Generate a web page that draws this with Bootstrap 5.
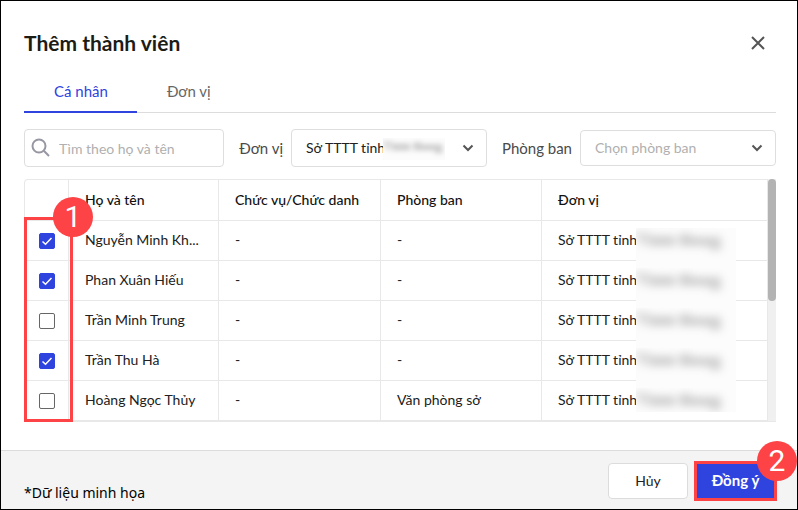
<!DOCTYPE html>
<html lang="vi">
<head>
<meta charset="utf-8">
<meta name="viewport" content="width=device-width, initial-scale=1">
<title>Thêm thành viên</title>
<link href="https://cdn.jsdelivr.net/npm/bootstrap@5.3.0/dist/css/bootstrap.min.css" rel="stylesheet">
<style>
:root{--brand:#2f43df;--mark:#fd4345;--line:#e8e8e8}
body{font-family:Lato,Roboto,"Liberation Sans",sans-serif;font-size:15px;line-height:20px;color:#212121}
.dialog-shell{border:1px solid #000;overflow:hidden}
.dialog-head{padding:27px 21px 0 23px}
.dialog-title{font-size:21px;line-height:30px;font-weight:700;color:#1c1c14}
.close-btn{width:36px;height:30px}
.member-tabs{margin:14px 21px 0 23px;height:41px;border-bottom:1px solid #dcdcdc}
.member-tabs .nav-link{height:41px;padding:9px 29px 10px 30px;color:#666;line-height:20px}
.member-tabs .nav-link.active{color:var(--brand);border-bottom:2px solid var(--brand)}
.filters{display:grid;grid-template-columns:200fr 67px 196fr 93px 196fr;align-items:center;padding:16px 21px 12px 23px}
.filters label{color:#4a4a4a;text-align:right;padding-right:8px;white-space:nowrap}
.field{height:38px;border:1px solid #dedede;border-radius:4px;font-size:14px;color:#212121;padding:0 14px;background:#fff;appearance:none}
.search-field{padding-left:34px}
.field::placeholder,.field.unset{color:#b0b0b0;opacity:1}
.short-field{height:36px}
.search-icon{left:7px;top:9px}
.chevron{right:12px;top:50%;margin-top:-6px;pointer-events:none}
.table-area{margin:0 21px 28px 23px}
.member-table{table-layout:fixed;border-collapse:separate;border-spacing:0;border:1px solid var(--line);border-bottom-width:2px;border-radius:4px 0 0 0;font-size:14px}
.member-table th,.member-table td{height:40px;padding:0 16px 2px;border-right:1px solid var(--line);border-top:1px solid var(--line);vertical-align:middle;white-space:nowrap}
.member-table thead th{font-weight:500;border-top:0;color:#111;padding-bottom:0}
.member-table tr>:last-child{border-right:0}
.member-table tr>:first-child{padding:0}
.col-check{width:44px}.col-name{width:150px}.col-title{width:162px}.col-dept{width:161px}
.member-table .form-check-input{display:block;float:none;width:16px;height:16px;margin:0 auto;border:1px solid #666;border-radius:2px;box-shadow:none}
.member-table .form-check-input:checked{background-color:var(--brand);border-color:var(--brand);background-size:14px 14px;background-position:center;background-image:url("data:image/svg+xml,%3csvg xmlns='http://www.w3.org/2000/svg' viewBox='0 0 14 14'%3e%3cpath d='M2.500 7.500 5.500 10.300 11.500 4' fill='none' stroke='%23fff' stroke-width='1.500'/%3e%3c/svg%3e")}
.scroll-track{width:8px;background:#f0f0f0;border-bottom:1px solid var(--line);flex:none}
.scroll-thumb{height:122px;background:#b3b3b3;border-radius:4px}
.veil{background:#fcfcfc}
.cell-veil{left:78px;top:-2px;width:100px;height:40px}
tr:last-child .cell-veil{height:24px}
.field-veil{left:92px;top:9px;width:62px;height:22px}
.frame{border:3px solid var(--mark);pointer-events:none}
.rows-frame{left:0;top:38px;bottom:0;width:49px}
.step{width:40px;height:40px;border-radius:50%;background:var(--mark);color:#fff;font-family:Roboto,sans-serif;font-size:30px;line-height:40px;text-align:center}
.step-one{left:29px;top:18px}
.step-two{right:-23px;top:-23px}
.dialog-foot{border-top:1px solid #dcdcdc;background:#f4f4f4;padding:9px 20px 8px 23px}
.sample-note{font-family:"Noto Sans","Open Sans",sans-serif;font-size:14px;line-height:16px;color:#000;padding-top:24px}
.foot-actions{gap:6px}
.btn-cancel{width:80px;height:36px;background:#fff;border:1px solid #dcdcdc;border-radius:4px;font-size:14px;line-height:20px;padding:0;color:#212121}
.confirm-wrap{border:3px solid var(--mark)}
.btn-confirm{width:77px;height:34px;background:var(--brand);color:#fff;border:0;border-radius:0;padding:0 0 2px;font-size:15px;line-height:20px;font-weight:700}
</style>
<script src="https://cdn.jsdelivr.net/npm/bootstrap@5.3.0/dist/js/bootstrap.bundle.min.js"></script>
</head>
<body>
<svg width="0" height="0" class="position-absolute" aria-hidden="true">
<defs>
<filter id="soft" x="-20%" y="-100%" width="140%" height="300%"><feGaussianBlur stdDeviation="4"/></filter>
<symbol id="hidden-place" viewBox="0 0 100 40"><g fill="#888" opacity=".38" filter="url(#soft)"><path d="M-2 5h16v3H-2zM4 5h5v12H4zM12 8h27v10H12zM43 6h12v12H43zM55 9h30v9H55zM74 12h11v10H74z"/></g></symbol>
<symbol id="chev" viewBox="0 0 14 12"><path d="M2.500 3.500 7 8l4.500-4.500" fill="none" stroke="#555" stroke-width="2"/></symbol>
</defs>
</svg>
<main class="dialog-shell min-vh-100 d-flex flex-column bg-white">
<header class="dialog-head d-flex justify-content-between align-items-center">
<h1 class="dialog-title mb-0">Thêm thành viên</h1>
<button type="button" class="close-btn btn p-0 border-0 d-flex align-items-center justify-content-center" aria-label="Đóng"><svg width="14" height="14" viewBox="0 0 14 14"><path d="M1 1l12 12M13 1L1 13" stroke="#555" stroke-width="2" fill="none"/></svg></button>
</header>
<nav class="member-tabs nav">
<a class="nav-link active" href="#ca-nhan" aria-current="page">Cá nhân</a>
<a class="nav-link" href="#don-vi">Đơn vị</a>
</nav>
<form class="filters">
<div class="position-relative">
<svg class="search-icon position-absolute" width="20" height="20" viewBox="0 0 20 20" fill="none" stroke="#9797a3" stroke-width="2"><circle cx="8" cy="8" r="6.500"/><path d="M12.800 12.800 18 18"/></svg>
<input type="search" class="field search-field w-100" placeholder="Tìm theo họ và tên" aria-label="Tìm theo họ và tên">
</div>
<label for="unit">Đơn vị</label>
<div class="position-relative">
<select id="unit" class="field w-100"><option>Sở TTTT tỉnh</option></select>
<span class="veil field-veil position-absolute overflow-hidden"><svg class="d-block" width="70" height="28"><use href="#hidden-place" width="70" height="28"/></svg></span>
<svg class="chevron position-absolute" width="14" height="12"><use href="#chev"/></svg>
</div>
<label for="dept">Phòng ban</label>
<div class="position-relative">
<select id="dept" class="field short-field unset w-100"><option>Chọn phòng ban</option></select>
<svg class="chevron position-absolute" width="14" height="12"><use href="#chev"/></svg>
</div>
</form>
<section class="table-area position-relative d-flex">
<table class="member-table w-100">
<colgroup><col class="col-check"><col class="col-name"><col class="col-title"><col class="col-dept"><col></colgroup>
<thead><tr><th></th><th scope="col">Họ và tên</th><th scope="col">Chức vụ/Chức danh</th><th scope="col">Phòng ban</th><th scope="col">Đơn vị</th></tr></thead>
<tbody>
<tr><td><input class="form-check-input" type="checkbox" checked aria-labelledby="m1"></td><td id="m1">Nguyễn Minh Kh...</td><td>-</td><td>-</td><td><div class="position-relative">Sở TTTT tỉnh<span class="veil cell-veil position-absolute overflow-hidden"><svg class="d-block" width="100" height="40"><use href="#hidden-place"/></svg></span></div></td></tr>
<tr><td><input class="form-check-input" type="checkbox" checked aria-labelledby="m2"></td><td id="m2">Phan Xuân Hiếu</td><td>-</td><td>-</td><td><div class="position-relative">Sở TTTT tỉnh<span class="veil cell-veil position-absolute overflow-hidden"><svg class="d-block" width="100" height="40"><use href="#hidden-place"/></svg></span></div></td></tr>
<tr><td><input class="form-check-input" type="checkbox" aria-labelledby="m3"></td><td id="m3">Trần Minh Trung</td><td>-</td><td>-</td><td><div class="position-relative">Sở TTTT tỉnh<span class="veil cell-veil position-absolute overflow-hidden"><svg class="d-block" width="100" height="40"><use href="#hidden-place"/></svg></span></div></td></tr>
<tr><td><input class="form-check-input" type="checkbox" checked aria-labelledby="m4"></td><td id="m4">Trần Thu Hà</td><td>-</td><td>-</td><td><div class="position-relative">Sở TTTT tỉnh<span class="veil cell-veil position-absolute overflow-hidden"><svg class="d-block" width="100" height="40"><use href="#hidden-place"/></svg></span></div></td></tr>
<tr><td><input class="form-check-input" type="checkbox" aria-labelledby="m5"></td><td id="m5">Hoàng Ngọc Thủy</td><td>-</td><td>Văn phòng sở</td><td><div class="position-relative">Sở TTTT tỉnh<span class="veil cell-veil position-absolute overflow-hidden"><svg class="d-block" width="100" height="40"><use href="#hidden-place"/></svg></span></div></td></tr>
</tbody>
</table>
<div class="scroll-track"><div class="scroll-thumb"></div></div>
<div class="frame rows-frame position-absolute"></div>
<span class="step step-one position-absolute">1</span>
</section>
<footer class="dialog-foot d-flex justify-content-between align-items-center flex-grow-1">
<span class="sample-note">*Dữ liệu minh họa</span>
<div class="foot-actions d-flex align-items-center">
<button type="button" class="btn btn-cancel">Hủy</button>
<div class="confirm-wrap position-relative d-flex"><button type="button" class="btn btn-confirm">Đồng ý</button><span class="step step-two position-absolute">2</span></div>
</div>
</footer>
</main>
</body>
</html>
